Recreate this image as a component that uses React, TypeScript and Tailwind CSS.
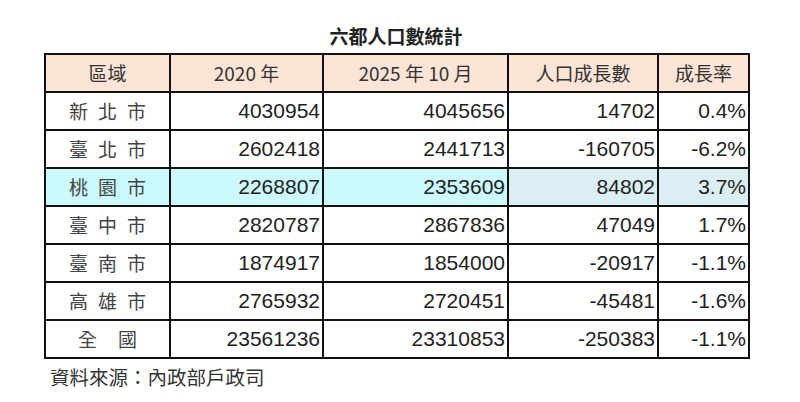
const rows = [
  { name: ["新", "北", "市"], y2020: "4030954", y2025: "4045656", diff: "14702", rate: "0.4%" },
  { name: ["臺", "北", "市"], y2020: "2602418", y2025: "2441713", diff: "-160705", rate: "-6.2%" },
  { name: ["桃", "園", "市"], y2020: "2268807", y2025: "2353609", diff: "84802", rate: "3.7%", hl: true },
  { name: ["臺", "中", "市"], y2020: "2820787", y2025: "2867836", diff: "47049", rate: "1.7%" },
  { name: ["臺", "南", "市"], y2020: "1874917", y2025: "1854000", diff: "-20917", rate: "-1.1%" },
  { name: ["高", "雄", "市"], y2020: "2765932", y2025: "2720451", diff: "-45481", rate: "-1.6%" },
  { name: ["全", "國"], y2020: "23561236", y2025: "23310853", diff: "-250383", rate: "-1.1%" },
];

const cjk = "font-['Noto_Sans_CJK_TC','Noto_Sans',sans-serif]";
const num = "font-['Liberation_Sans','Noto_Sans_CJK_TC',sans-serif]";

function Header() {
  const th = `border-2 border-[#111] bg-[#fce4d6] text-center text-[19px] font-normal text-[#333] ${cjk}`;
  return (
    <tr className="h-[38px]">
      <th className={th}>區域</th>
      <th className={th}>2020 年</th>
      <th className={th}>2025 年 10 月</th>
      <th className={th}>人口成長數</th>
      <th className={th}>成長率</th>
    </tr>
  );
}

export default function App() {
  return (
    <div className="h-[402px] w-[800px] bg-white pl-[44px] pt-[25px]">
      <div className="w-[704px]">
        <h1 className={`mb-[6px] text-center text-[19px] font-bold leading-[22px] text-[#222] ${cjk}`}>六都人口數統計</h1>
        <table className="w-[704px] table-fixed border-collapse">
          <colgroup>
            <col className="w-[125px]" />
            <col className="w-[153px]" />
            <col className="w-[185px]" />
            <col className="w-[150px]" />
            <col className="w-[91px]" />
          </colgroup>
          <thead>
            <Header />
          </thead>
          <tbody>
            {rows.map((r) => {
              const base = "border-2 border-[#111] text-right pr-[2px] text-[21px] text-[#222] " + num;
              const a = r.hl ? "bg-[#ccf9fc]" : "bg-white";
              const b = r.hl ? "bg-[#dbeef3]" : "bg-white";
              return (
                <tr key={r.y2020} className="h-[38px]">
                  <td className={`border-2 border-[#111] text-[19px] text-[#444] ${a} ${cjk}`}>
                    <div className={`flex justify-center ${r.name.length === 2 ? "gap-[21px]" : "gap-[10px]"}`}>
                      {r.name.map((c, i) => (
                        <span key={i}>{c}</span>
                      ))}
                    </div>
                  </td>
                  <td className={`${base} ${a}`}>{r.y2020}</td>
                  <td className={`${base} ${a}`}>{r.y2025}</td>
                  <td className={`${base} ${b}`}>{r.diff}</td>
                  <td className={`${base} ${b}`}>{r.rate}</td>
                </tr>
              );
            })}
          </tbody>
        </table>
        <p className={`mt-[6px] pl-[6px] text-[19.5px] leading-[24px] text-[#333] ${cjk}`}>資料來源：內政部戶政司</p>
      </div>
    </div>
  );
}
